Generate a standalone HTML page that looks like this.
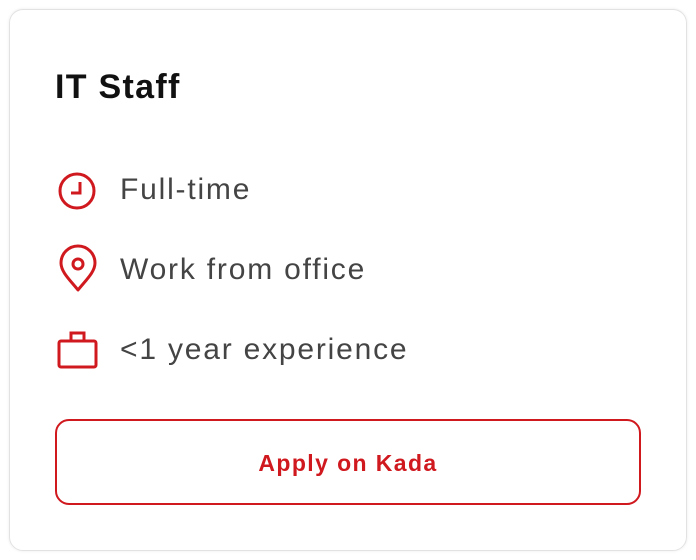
<!DOCTYPE html>
<html><head><style>
body{margin:0;width:696px;height:560px;background:#fff;font-family:"Liberation Sans",sans-serif;overflow:hidden}
.card{position:absolute;left:9px;top:9px;width:676px;height:540px;border:1px solid #e2e2e2;border-radius:14px;box-shadow:0 0 3px rgba(0,0,0,.08)}
.t{position:absolute;left:55px;top:68px;font-size:34px;font-weight:bold;color:#111;letter-spacing:1.3px}
.row{position:absolute;left:120px;font-size:30px;color:#444;letter-spacing:1.8px}
svg{position:absolute}
.btn{position:absolute;left:55px;top:419px;width:582px;height:82px;border:2px solid #d0191f;border-radius:14px;color:#d0191f;font-weight:bold;font-size:23px;text-align:center;line-height:84px;letter-spacing:1.4px}
</style></head><body>
<div class="card"></div>
<div class="t">IT Staff</div>
<svg width="696" height="560" style="left:0;top:0" fill="none" stroke="#d0191f" stroke-width="3">
<circle cx="77" cy="191" r="17"/>
<path d="M80 182 V193 H71"/>
<path d="M78 290 C70 280 61 272 61 263 A17 17 0 0 1 95 263 C95 272 86 280 78 290 Z" stroke-linejoin="round"/>
<circle cx="78" cy="264" r="5"/>
<rect x="59" y="341" width="37" height="26" rx="2"/>
<rect x="71" y="333" width="13" height="8"/>
</svg>
<div class="row" style="top:173px">Full-time</div>
<div class="row" style="top:253px">Work from office</div>
<div class="row" style="top:333px">&lt;1 year experience</div>
<div class="btn">Apply on Kada</div>
</body></html>
